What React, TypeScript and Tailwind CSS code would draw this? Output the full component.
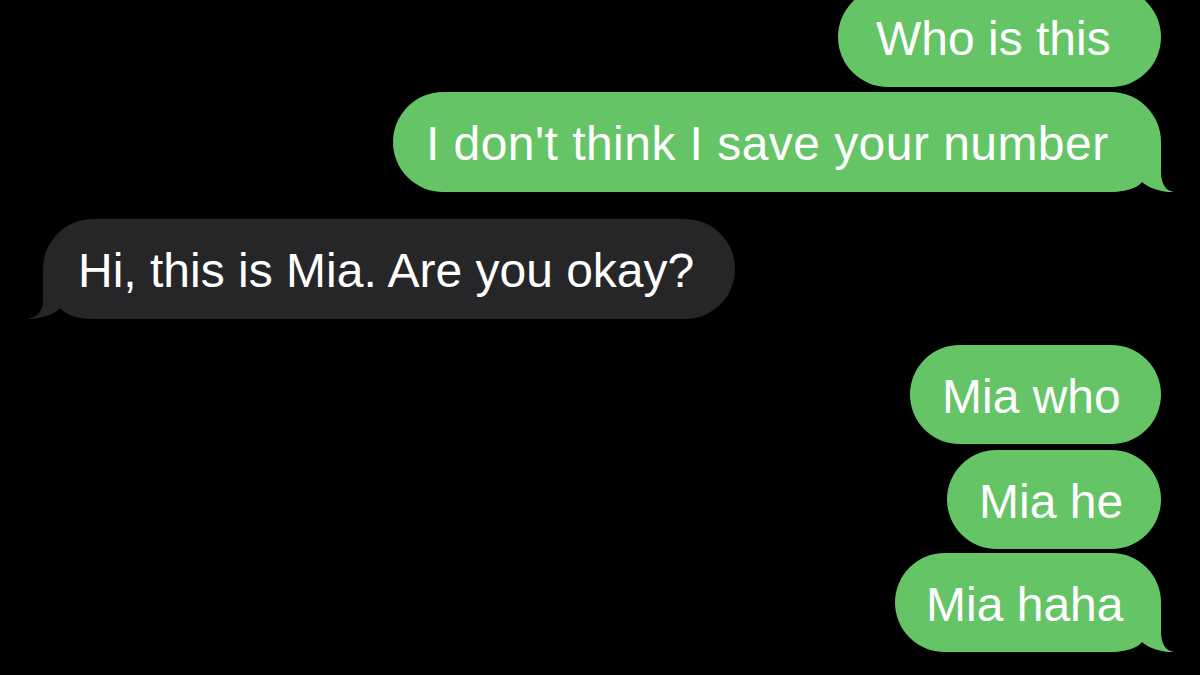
import React from "react";

const GREEN = "#65c466";
const GRAY = "#262628";

function TailRight({ color }: { color: string }) {
  return (
    <svg
      className="absolute"
      style={{ right: -14, bottom: -1 }}
      width="64"
      height="52"
      viewBox="-50 -51 64 52"
    >
      <path
        d="M -48 0 L -48 -50 L 0 -50 L 0 -20 C 0 -8 5 -1 13 0 C 3 0.5 -12 -3 -19 -10 C -25 -3 -35 -1 -48 0 Z"
        fill={color}
      />
    </svg>
  );
}

function TailLeft({ color }: { color: string }) {
  return (
    <svg
      className="absolute"
      style={{ left: -18, bottom: -1 }}
      width="68"
      height="52"
      viewBox="-50 -51 68 52"
    >
      <g transform="translate(-32 0) scale(-1 1)">
        <path
          d="M -48 0 L -48 -50 L 0 -50 L 0 -18 C 0 -7 7 -1 17 0 C 6 0.5 -10 -3 -17 -11 C -24 -3 -35 -1 -48 0 Z"
          fill={color}
        />
      </g>
    </svg>
  );
}

function Bubble({
  text,
  width,
  pl,
  h,
  gray,
  tail,
  tracking,
}: {
  text: string;
  width: number;
  pl: number;
  h: number;
  gray?: boolean;
  tail?: boolean;
  tracking?: number;
}) {
  const color = gray ? GRAY : GREEN;
  return (
    <div
      className="relative flex items-center rounded-full text-white text-[48px] leading-none whitespace-nowrap"
      style={{
        width,
        height: h,
        paddingLeft: pl,
        backgroundColor: color,
        letterSpacing: tracking ? `${tracking}px` : undefined,
      }}
    >
      {tail && (gray ? <TailLeft color={color} /> : <TailRight color={color} />)}
      <span className="relative translate-y-[2px]">{text}</span>
    </div>
  );
}

export default function App() {
  return (
    <div
      className="w-[1200px] h-[675px] bg-black overflow-hidden"
      style={{ fontFamily: '"Liberation Sans", Arial, sans-serif' }}
    >
      <div className="flex flex-col mt-[-13px]">
        <div className="flex justify-end pr-[39px]">
          <Bubble text="Who is this" width={323} pl={38} h={100} />
        </div>
        <div className="flex justify-end pr-[39px] mt-[5px]">
          <Bubble
            text="I don't think I save your number"
            width={768}
            pl={33}
            h={100}
            tail
            tracking={0.45}
          />
        </div>
        <div className="flex justify-start pl-[43px] mt-[27px]">
          <Bubble text="Hi, this is Mia. Are you okay?" width={692} pl={35} h={100} gray tail />
        </div>
        <div className="flex justify-end pr-[39px] mt-[26px]">
          <Bubble text="Mia who" width={251} pl={32} h={99} />
        </div>
        <div className="flex justify-end pr-[39px] mt-[6px]">
          <Bubble text="Mia he" width={214} pl={32} h={99} />
        </div>
        <div className="flex justify-end pr-[39px] mt-[4px]">
          <Bubble text="Mia haha" width={266} pl={31} h={99} tail />
        </div>
      </div>
    </div>
  );
}
